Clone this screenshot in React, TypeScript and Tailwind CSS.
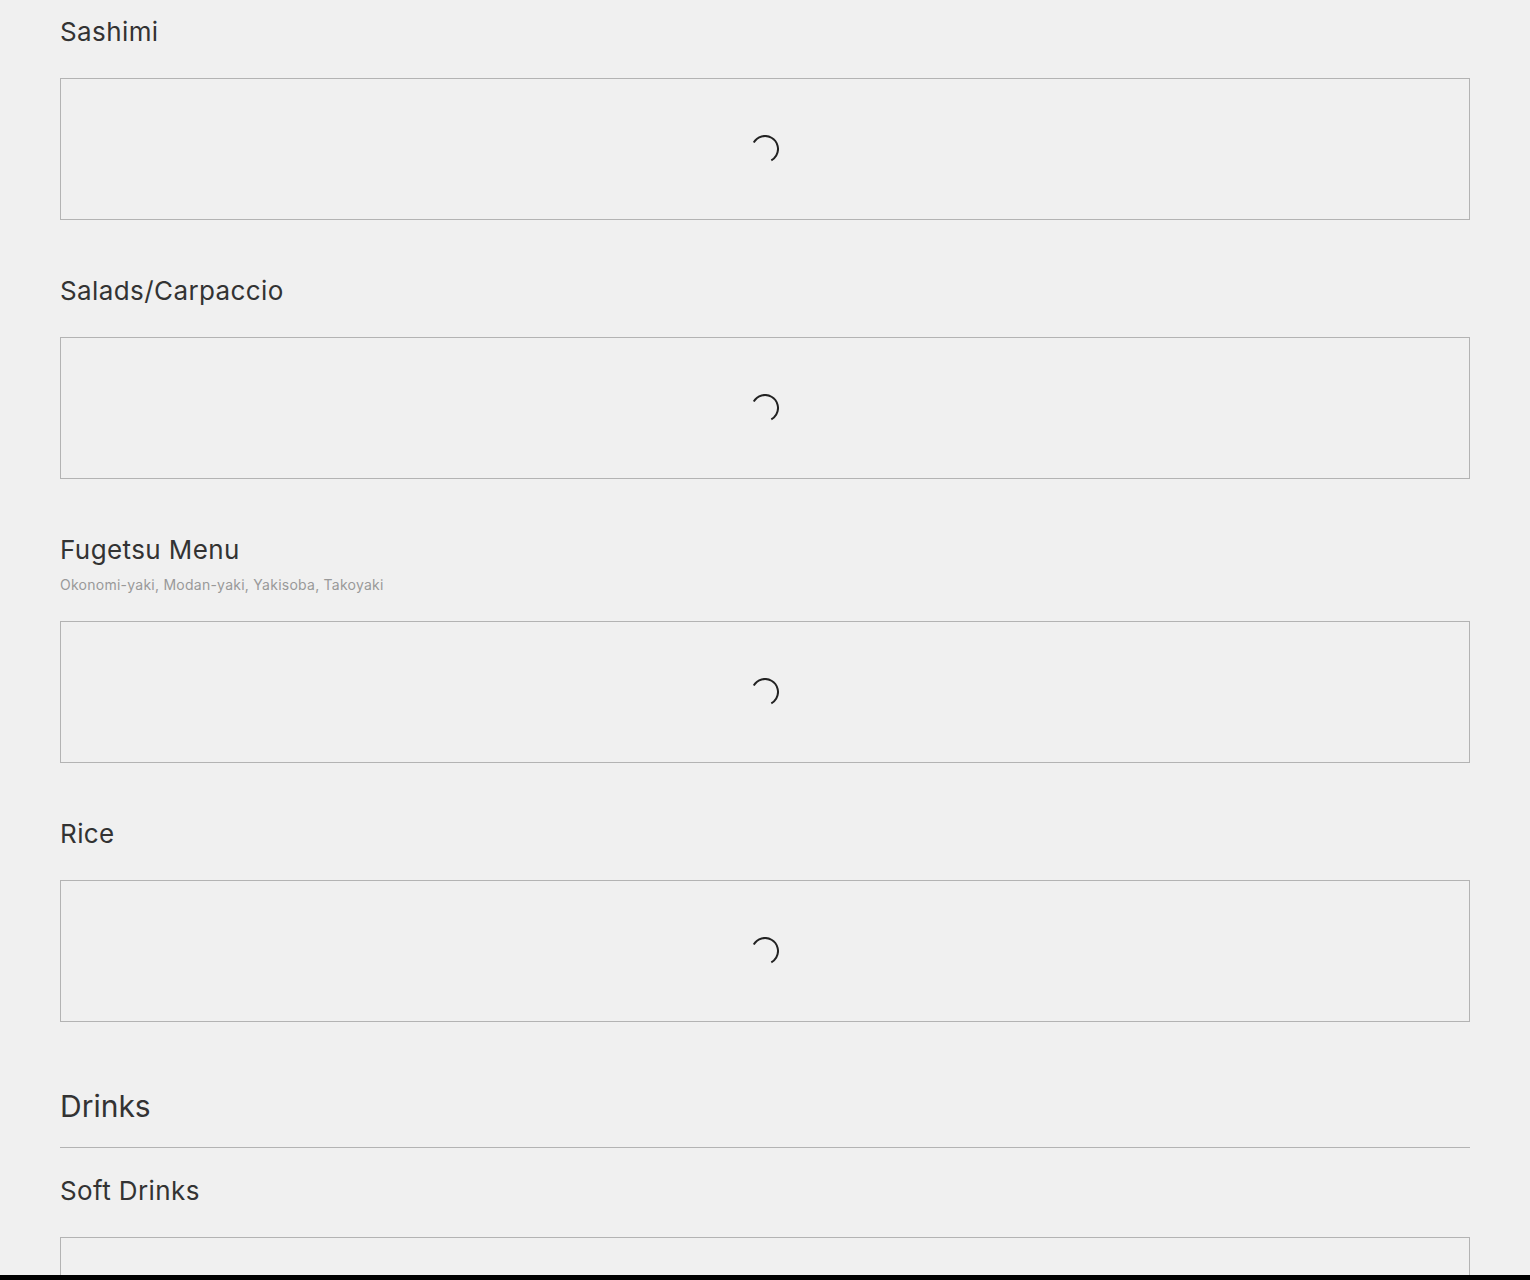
const FONT = "font-['Inter','Liberation_Sans',sans-serif]"

function Spinner() {
  return (
    <svg width="28" height="28" viewBox="0 0 28 28" fill="none">
      <circle
        cx="14"
        cy="14"
        r="13"
        stroke="#222"
        strokeWidth="2"
        strokeDasharray="47.6 100"
        transform="rotate(210 14 14)"
      />
    </svg>
  )
}

function LoadingBox() {
  return (
    <div className="h-[142px] border border-[#b3b3b3] flex items-center justify-center">
      <Spinner />
    </div>
  )
}

function MenuSection({ title, subtitle }: { title: string; subtitle?: string }) {
  return (
    <section className="flex flex-col">
      <h3 className="text-[26px] leading-[31px] tracking-[0.4px] text-[#333]">{title}</h3>
      {subtitle && (
        <p className="mt-[10px] text-[14px] leading-[20px] tracking-[0.25px] text-[#999]">{subtitle}</p>
      )}
      <div className={subtitle ? 'mt-[26px]' : 'mt-[31px]'}>
        <LoadingBox />
      </div>
    </section>
  )
}

export default function App() {
  return (
    <div className={`min-h-screen bg-[#f0f0f0] px-[60px] pt-[16px] flex flex-col ${FONT}`}>
      <div className="flex flex-col gap-[55px]">
        <MenuSection title="Sashimi" />
        <MenuSection title="Salads/Carpaccio" />
        <MenuSection title="Fugetsu Menu" subtitle="Okonomi-yaki, Modan-yaki, Yakisoba, Takoyaki" />
        <MenuSection title="Rice" />
      </div>

      <div className="mt-[66px] flex flex-col">
        <h2 className="text-[30px] leading-[36px] text-[#333]">Drinks</h2>
        <div className="mt-[23px] border-t border-[#b3b3b3]" />
      </div>
      <div className="mt-[27px] pb-[40px]">
        <MenuSection title="Soft Drinks" />
      </div>

      <div className="fixed bottom-0 left-0 right-0 h-[5px] bg-black" />
    </div>
  )
}
